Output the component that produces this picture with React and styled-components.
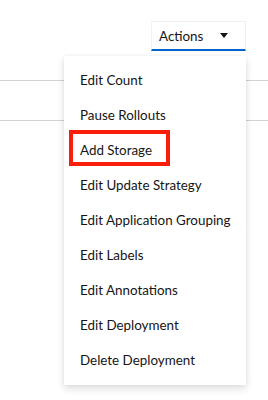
import React from "react";
import styled, { createGlobalStyle } from "styled-components";

const Global = createGlobalStyle`
  body {
    margin: 0;
    background: #fff;
    font-family: Lato, "Open Sans", sans-serif;
    color: #151515;
  }
`;

const items = [
  "Edit Count",
  "Pause Rollouts",
  "Add Storage",
  "Edit Update Strategy",
  "Edit Application Grouping",
  "Edit Labels",
  "Edit Annotations",
  "Edit Deployment",
  "Delete Deployment",
];

export default function App() {
  return (
    <Page>
      <Global />
      <Toolbar>
        <Dropdown>
          <Toggle>
            Actions
            <Caret viewBox="0 0 10 6">
              <path d="M0 0h10L5 6z" fill="#151515" />
            </Caret>
          </Toggle>
          <Menu>
            {items.map((label) => (
              <Item key={label} highlighted={label === "Add Storage"}>
                {label}
              </Item>
            ))}
          </Menu>
        </Dropdown>
      </Toolbar>
      <Rows>
        <Row />
        <Row />
      </Rows>
    </Page>
  );
}

const Page = styled.div`
  width: 268px;
  height: 400px;
  overflow: hidden;
`;

const Toolbar = styled.div`
  display: flex;
  justify-content: flex-end;
  padding: 21px 22px 0 0;
`;

const Dropdown = styled.div`
  position: relative;
`;

const Toggle = styled.button`
  display: flex;
  align-items: center;
  justify-content: space-between;
  box-sizing: border-box;
  width: 95px;
  height: 30px;
  padding: 0 17px 0 7px;
  background: #fff;
  border: 1px solid #f0f0f0;
  border-bottom: 2px solid #06c;
  font-family: Lato, "Open Sans", sans-serif;
  font-size: 13.4px;
  color: #151515;
`;

const Caret = styled.svg`
  width: 8px;
  height: 5px;
`;

const Menu = styled.ul`
  position: absolute;
  top: 35px;
  right: 0;
  width: 182px;
  margin: 0;
  padding: 7px 0;
  list-style: none;
  background: #fff;
  box-shadow: 0 4px 8px rgba(3, 3, 3, 0.12), 0 0 4px rgba(3, 3, 3, 0.06);
  z-index: 2;
`;

const Item = styled.li`
  position: relative;
  height: 35px;
  line-height: 35px;
  padding: 0 16px;
  font-size: 13.4px;
  white-space: nowrap;

  &::after {
    content: "";
    display: ${(p) => (p.highlighted ? "block" : "none")};
    position: absolute;
    left: 5px;
    top: -3px;
    width: 101px;
    height: 36px;
    box-sizing: border-box;
    border: 4px solid #fa1e0a;
  }
`;

const Rows = styled.div`
  display: flex;
  flex-direction: column;
  margin-top: 29px;
`;

const Row = styled.div`
  height: 39px;
  border-bottom: 1px solid #d2d2d2;

  &:first-child {
    height: 0;
  }
`;
